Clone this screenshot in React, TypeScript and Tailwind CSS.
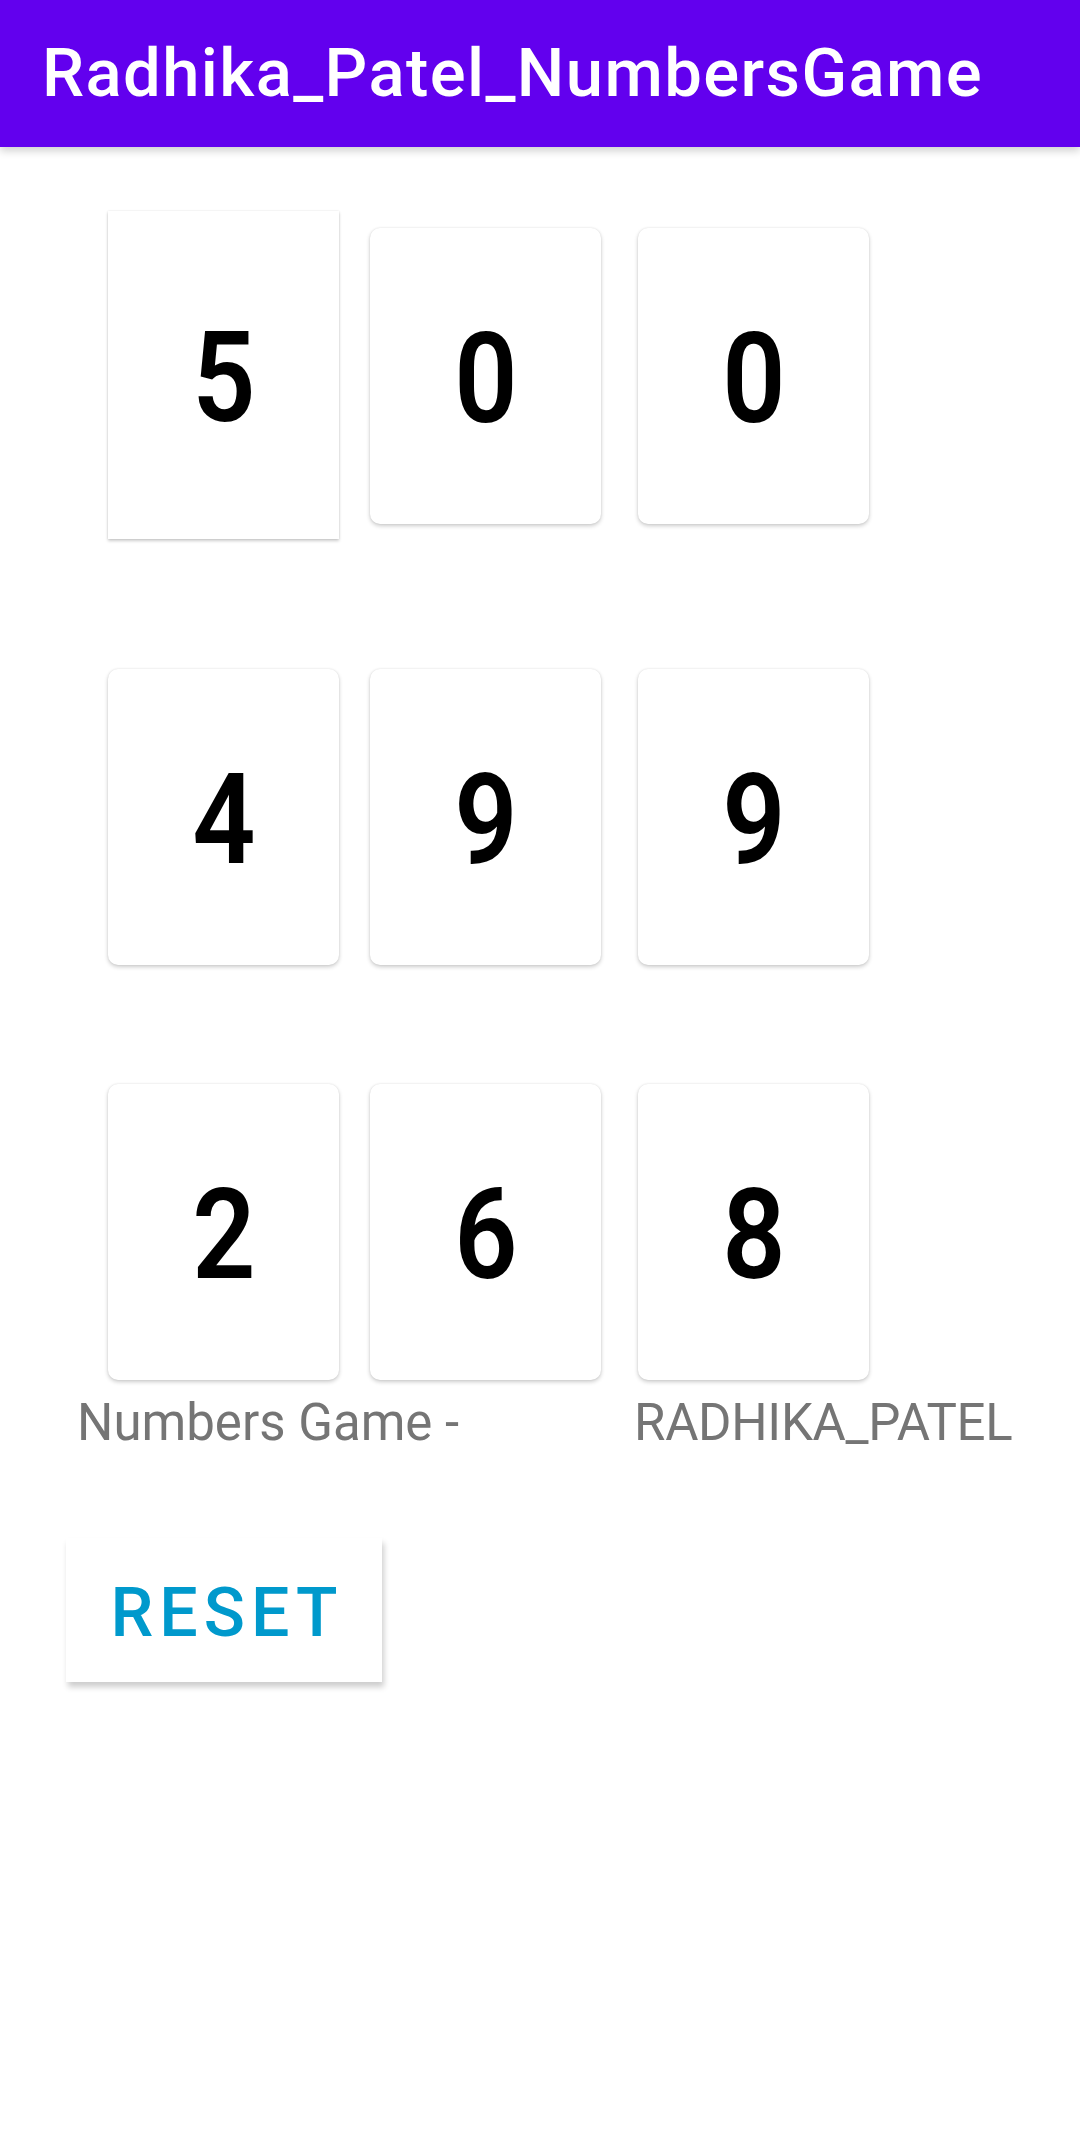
export default function App() {
  const rows = [
    ["5", "0", "0"],
    ["4", "9", "9"],
    ["2", "6", "8"],
  ];
  const rowTop = ["mt-[81px]", "mt-[145px]", "mt-[119px]"];
  const gaps = ["", "ml-[31px]", "ml-[37px]"];

  return (
    <div className="w-[1080px] h-[2131px] bg-white font-['Roboto',sans-serif] overflow-hidden">
      {/* toolbar */}
      <div className="relative z-10 h-[147px] bg-[#6200EE] pl-[42px] flex items-center shadow-[0_4px_8px_rgba(0,0,0,0.18)]">
        <h1 className="text-white text-[67px] font-medium leading-none tracking-[1.4px]">
          Radhika_Patel_NumbersGame
        </h1>
      </div>

      {/* card grid */}
      {rows.map((row, r) => (
        <div key={r} className={`flex items-start pl-[108px] ${rowTop[r]}`}>
          {row.map((n, c) => {
            // first card is mid-flip, drawn taller with square corners
            const flipping = r === 0 && c === 0;
            return (
              <div
                key={c}
                className={
                  flipping
                    ? "w-[231px] h-[328px] -mt-[17px] -mb-[15px] bg-white flex items-center justify-center shadow-[0_2px_3px_rgba(0,0,0,0.2),0_0_2px_rgba(0,0,0,0.1)]"
                    : `w-[231px] h-[296px] ${gaps[c]} rounded-[10px] bg-white flex items-center justify-center shadow-[0_2px_4px_rgba(0,0,0,0.2),0_0_2px_rgba(0,0,0,0.1)]`
                }
              >
                <span className="text-[126px] font-semibold leading-none text-black pt-[6px] scale-x-[0.88]">
                  {n}
                </span>
              </div>
            );
          })}
        </div>
      ))}

      {/* caption */}
      <div className="flex mt-[13px] text-[51px] leading-[60px] text-[#757575]">
        <span className="pl-[77px] w-[634px]">Numbers Game -</span>
        <span className="tracking-[-0.3px]">RADHIKA_PATEL</span>
      </div>

      {/* reset button */}
      <button className="ml-[66px] mt-[85px] w-[316px] h-[144px] bg-white flex items-center justify-center shadow-[2px_5px_6px_rgba(0,0,0,0.2)]">
        <span className="text-[#0099CC] text-[68px] font-medium tracking-[6px] leading-none pl-[6px] pt-[6px]">
          RESET
        </span>
      </button>
    </div>
  );
}
